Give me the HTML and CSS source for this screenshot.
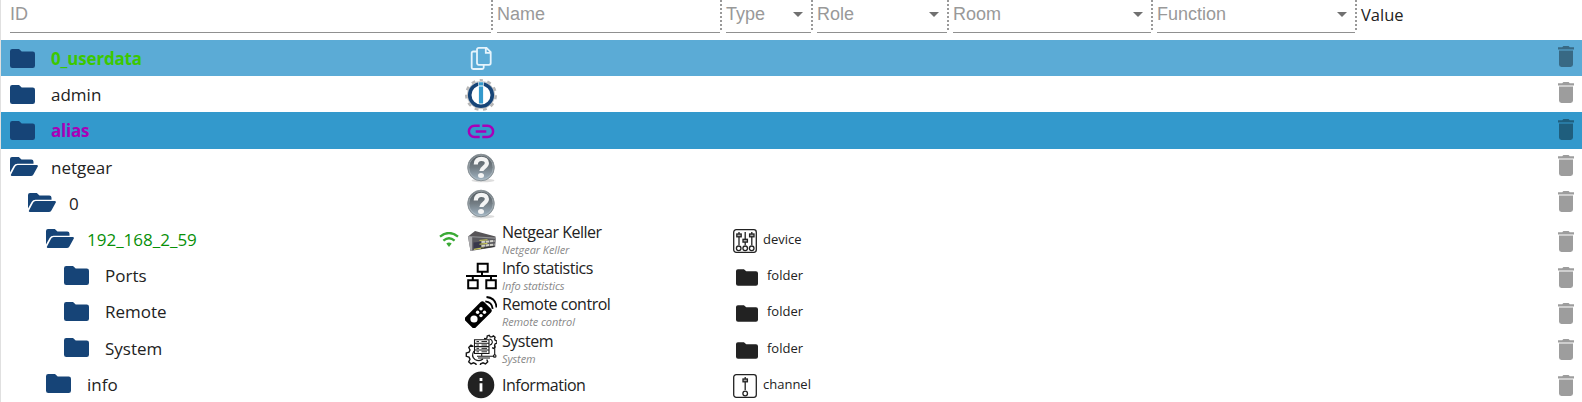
FILE: index.html
```
<!DOCTYPE html>
<html lang="en">
<head>
<meta charset="utf-8">
<title>Objects</title>
<link rel="stylesheet" href="styles.css">
</head>
<body>
<svg class="defs" width="0" height="0">
  <defs>
    <linearGradient id="gray" x1="0" y1="0" x2="0" y2="1"><stop offset="0" stop-color="#50575c"/><stop offset=".5" stop-color="#737d84"/><stop offset="1" stop-color="#a3b7c6"/></linearGradient>
    <symbol id="closed" viewBox="0 0 25 19"><path d="M2.2 0H9l2.7 2.5h11A2.3 2.3 0 0 1 25 4.8v11.9a2.3 2.3 0 0 1-2.3 2.3H2.3A2.3 2.3 0 0 1 0 16.700V2.200A2.200 2.200 0 0 1 2.200 0z"/></symbol>
    <symbol id="open" viewBox="0 0 28 19"><path d="M0 15.500V2A2 2 0 0 1 2 0h6.800l2.700 2.600h9.800a2.200 2.200 0 0 1 2.200 2.200V6.700H7.500A4.500 4.500 0 0 0 3.600 9z"/><path d="M7.700 8h19.200a1 1 0 0 1 .9 1.500l-4.400 8A3 3 0 0 1 20.800 19H1.800a.9.9 0 0 1-.8-1.400L5.200 9.500A2.900 2.900 0 0 1 7.700 8z"/></symbol>
    <symbol id="trash" viewBox="0 0 16 21"><path d="M1 4.600h14v13.800A2.500 2.500 0 0 1 12.500 21h-9A2.500 2.500 0 0 1 1 18.400zM0 1.200h4.200L5.400 0h5.200l1.200 1.200H16v2.200H0z"/></symbol>
    <symbol id="help" viewBox="0 0 32 32"><ellipse cx="18" cy="28.500" rx="11.500" ry="1.700" fill="#ddd"/><circle cx="16" cy="15.500" r="13.300" fill="url(#gray)" stroke="#8c9499" stroke-width="1"/><circle cx="16" cy="15.500" r="12.200" fill="none" stroke="#b9c2c8" stroke-width=".6"/><path d="M10.800 12.500c0-4 2.400-5.700 5.600-5.700 3.400 0 5.500 1.700 5.500 4.300 0 4.200-5.500 4.200-5.500 8" fill="none" stroke="#f4f4f4" stroke-width="4.200"/><ellipse cx="16" cy="23.400" rx="3" ry="2.500" fill="#f4f4f4"/></symbol>
  </defs>
</svg>
<main class="objects">
  <header class="head">
    <div class="col col-id">ID</div>
    <div class="col col-name">Name</div>
    <div class="col select">Type<i class="arrow"></i></div>
    <div class="col select">Role<i class="arrow"></i></div>
    <div class="col select">Room<i class="arrow"></i></div>
    <div class="col select">Function<i class="arrow"></i></div>
    <div class="value">Value</div>
  </header>

  <div class="row row-userdata">
    <div class="id"><svg class="closed"><use href="#closed"/></svg><b class="green">0_userdata</b></div>
    <svg class="icon" viewBox="0 0 32 32" fill="none" stroke="#e6f4fc" stroke-width="1.800"><path d="M11.800 8.500H8.200A1.500 1.500 0 0 0 6.700 10v14.500A1.500 1.500 0 0 0 8.200 26h9a1.500 1.500 0 0 0 1.500-1.500v-2.700M13.700 4.900h7.800l4.200 4.300v10.900a1.700 1.700 0 0 1-1.700 1.700H13.700a1.700 1.700 0 0 1-1.700-1.700V6.600a1.700 1.700 0 0 1 1.700-1.700zM20.800 5v4.900h5"/></svg>
    <svg class="trash"><use href="#trash"/></svg>
  </div>
  <div class="row">
    <div class="id"><svg class="closed"><use href="#closed"/></svg><span>admin</span></div>
    <svg class="icon" viewBox="0 0 32 32" fill="none"><circle cx="16" cy="16" r="14.600" stroke="#b7b7b7" stroke-width="2.800" stroke-dasharray="3.800 4.540" stroke-dashoffset="1.900" transform="rotate(-90 16 16)"/><circle cx="16" cy="16" r="13.700" stroke="#c5c5c5"/><circle cx="16" cy="16" r="11.300" fill="#fff" stroke="#164477" stroke-width="3.600"/><path d="M16 2.800v5.400" stroke="#fff" stroke-width="5.400"/><path d="M16 3.200v3.300M16 7.500v17" stroke="#3399cc" stroke-width="4.200"/></svg>
    <svg class="trash"><use href="#trash"/></svg>
  </div>
  <div class="row row-alias">
    <div class="id"><svg class="closed"><use href="#closed"/></svg><b class="purple">alias</b></div>
    <svg class="icon" viewBox="0 0 32 32" fill="none" stroke="#a800b7" stroke-width="2.500"><path d="M14.700 10.800H9.500a5.600 5.600 0 0 0 0 11.200h5.200M17.300 10.800h5.200a5.600 5.600 0 0 1 0 11.200h-5.200M10.700 16.400h10.600"/></svg>
    <svg class="trash"><use href="#trash"/></svg>
  </div>
  <div class="row">
    <div class="id"><svg class="open"><use href="#open"/></svg><span>netgear</span></div>
    <svg class="icon"><use href="#help"/></svg>
    <svg class="trash"><use href="#trash"/></svg>
  </div>
  <div class="row">
    <div class="id level1"><svg class="open"><use href="#open"/></svg><span>0</span></div>
    <svg class="icon"><use href="#help"/></svg>
    <svg class="trash"><use href="#trash"/></svg>
  </div>
  <div class="row low">
    <div class="id level2"><svg class="open"><use href="#open"/></svg><span class="device-id">192_168_2_59</span>
      <svg class="wifi" viewBox="0 0 20 15"><path d="M1 4.600q9-7.200 18 0M4.400 8.600q5.600-4.700 11.200 0" fill="none" stroke="#3aaa35" stroke-width="2.300"/><path d="M7.300 11.600q2.700-2 5.400 0L10 15z" fill="#3aaa35"/></svg>
    </div>
    <svg class="icon" viewBox="0 0 32 32"><path d="M3 12.500L10 7l20.500 5.500v2L6 17z" fill="#575457"/><path d="M3 12.500l27.800 1.700-.6 8.800L5.500 27z" fill="#5a595e"/><path d="M3 12.500l27.500 1.600" stroke="#929497" stroke-width="1.200"/><path d="M3 12.600L5.500 27l1.700-.3V13z" fill="#aaaaad"/><path d="M8.500 18.600l7.500-.8v5.400l-7.500 1.300z" fill="#37374a"/><path d="M16.500 18l13-1M16.500 22l13-1.500" stroke="#d2d2ca" stroke-width="2" stroke-dasharray="3.500 .7"/><path d="M14.500 16.400l8-.6M14.500 20.200l8-.8M9 25.400l10-1.700" stroke="#d0cf55" stroke-width="1"/><path d="M16 24.400l13-2" stroke="#333" stroke-width="1"/></svg>
    <div class="name"><span class="long">Netgear Keller</span><em>Netgear Keller</em></div>
    <div class="type"><svg class="box" viewBox="0 0 24 24" fill="none" stroke="#222" stroke-width="1.300"><rect x=".7" y=".7" width="22.600" height="22.600" rx="2.500"/><path d="M6 3v13M12.200 3v13M18.800 3v13"/><g fill="#aaa"><rect x="3.800" y="5" width="4.400" height="2.800"/><rect x="10" y="10.300" width="4.400" height="2.800"/><rect x="16.600" y="5" width="4.400" height="2.800"/></g><circle cx="5.700" cy="19.300" r="2.300"/><circle cx="12.200" cy="19.300" r="2.300"/><circle cx="18.700" cy="19.300" r="2.300"/></svg><span>device</span></div>
    <svg class="trash"><use href="#trash"/></svg>
  </div>
  <div class="row low">
    <div class="id level3"><svg class="closed"><use href="#closed"/></svg><span>Ports</span></div>
    <svg class="icon" viewBox="0 0 32 32" fill="none" stroke="#000" stroke-width="2"><path d="M12.700 3.700h10v8h-10zM3.200 20.200h9.500v8H3.200zM21.300 20.200h9.500v8h-9.500zM17 12v4M1 16h31M7.800 16v4M26 16v4"/></svg>
    <div class="name"><span class="long">Info statistics</span><em>Info statistics</em></div>
    <div class="type"><svg class="small"><use href="#closed"/></svg><span>folder</span></div>
    <svg class="trash"><use href="#trash"/></svg>
  </div>
  <div class="row low">
    <div class="id level3"><svg class="closed"><use href="#closed"/></svg><span>Remote</span></div>
    <svg class="icon" viewBox="0 0 32 32"><rect x="5.700" y="5.500" width="14.600" height="26.500" rx="2.500" transform="rotate(45 13 19)"/><g fill="#fff"><circle cx="9" cy="23" r="3.600"/><circle cx="16" cy="12.700" r="1.700"/><circle cx="19.500" cy="16.200" r="1.700"/><circle cx="12.600" cy="16.200" r="1.700"/><circle cx="16" cy="19.600" r="1.700"/></g><path d="M21.500 1q9.500 1 10 10.500M20.300 5.300q6.700.7 7.400 7.500" fill="none" stroke="#000" stroke-width="1.800"/></svg>
    <div class="name"><span class="long">Remote control</span><em>Remote control</em></div>
    <div class="type"><svg class="small"><use href="#closed"/></svg><span>folder</span></div>
    <svg class="trash"><use href="#trash"/></svg>
  </div>
  <div class="row low">
    <div class="id level3"><svg class="closed"><use href="#closed"/></svg><span>System</span></div>
    <svg class="icon" viewBox="0 0 32 32" fill="none" stroke="#161616" stroke-width="1.100"><path stroke-width="1.400" d="M8.500 13.500L6 12.200 3.800 14.500 5 17l-1 2.200-2.700.8v3.300l2.700.8 1 2.200-1.300 2.500 2.300 2.200 2.500-1.200 2.300 1 .8 2.500h3.300l.8-2.500 2.300-1 2.500 1.200 2.200-2.200-.9-2.200"/><path stroke-width="1.300" d="M19 5.500l1.700.3 1.300-1L22.200 3l2-.7 1.100 1.500 1.700.1 1.400-1 1.700 1.400-.6 1.600.8 1.500 1.600.6v2.200l-1.700.6-.7 1.500.6 1.700-1.600 1.400-1.400-.8"/><path d="M9 18q-3.500 5 1 8.500 4.500 2.500 8-.5M24.500 6q3 .6 2.800 3.700-.4 2-2.800 2.500"/><path d="M9.500 6.700H24v13.800H9.500zM9.500 10.200H24M9.500 13.600H24M9.500 17H24"/><path stroke-width=".9" d="M11.500 8.500H14M16.500 8.500H22M11.500 12H14M16.500 12H22M11.500 15.400H14M16.500 15.400H22M11.500 18.800H14M16.500 18.800H22"/><path d="M16.700 20.500v3M12 23.300h17.500M13 25h12M29.700 12v10"/><circle cx="29.700" cy="23" r="1.300"/></svg>
    <div class="name"><span class="long">System</span><em>System</em></div>
    <div class="type"><svg class="small"><use href="#closed"/></svg><span>folder</span></div>
    <svg class="trash"><use href="#trash"/></svg>
  </div>
  <div class="row low">
    <div class="id level2"><svg class="closed"><use href="#closed"/></svg><span>info</span></div>
    <svg class="icon" viewBox="0 0 32 32"><circle cx="16" cy="15.900" r="13.300" fill="#222"/><path d="M14.600 9h2.800v2.900h-2.800zM14.600 14.200h2.800v8.200h-2.800z" fill="#fff"/></svg>
    <div class="name single"><span class="long">Information</span></div>
    <div class="type"><svg class="box" viewBox="0 0 24 24" fill="none" stroke="#222" stroke-width="1.300"><rect x=".7" y=".7" width="22.600" height="22.600" rx="2.500"/><path d="M12.200 3v13"/><rect x="10" y="5" width="4.400" height="2.800" fill="#aaa"/><circle cx="12.200" cy="19.500" r="2.300"/></svg><span>channel</span></div>
    <svg class="trash"><use href="#trash"/></svg>
  </div>
</main>
</body>
</html>
```
FILE: styles.css
```
* { box-sizing: border-box; }
body { margin: 0; background: #fff; color: #222; font-family: "Open Sans", "Noto Sans", sans-serif; overflow: hidden; }
.defs { display: block; height: 0; }
.objects { width: 1582px; height: 402px; overflow: hidden; border-left: 1px solid #e0e0e0; }
.head { display: grid; grid-template-columns: 481px 223px 85px 130px 198px 198px 1fr; column-gap: 6px; height: 40px; padding-left: 9px; color: #999; font: 18px/28px "Liberation Sans", Arial, sans-serif; }
.col { position: relative; height: 33px; border-bottom: 1px solid #909090; }
.select { display: flex; justify-content: space-between; }
.col::after { content: ""; position: absolute; left: 100%; top: 0; width: 2px; height: 30px; background: repeating-linear-gradient(#999 0 2px, transparent 2px 4px); }
.arrow { width: 0; height: 0; margin: 12px 8px 0 0; border: 5.500px solid transparent; border-top: 5.500px solid #707070; border-bottom: 0; }
.value { color: #222; font: 16.500px/30px "Open Sans", sans-serif; }

.row { display: grid; grid-template-columns: 464px 32px 5px 231px 1fr 24px; height: 36.200px; align-items: start; font-size: 17px; }
.row-userdata { background: #5babd6; }
.row-alias { background: #3399cc; }
.id { grid-column: 1; display: flex; height: 36px; padding-left: 9px; line-height: 37px; color: #222; }
.level1 { padding-left: 27px; }
.level2 { padding-left: 45px; }
.level3 { padding-left: 63px; }
.id span, .id b { margin-left: 16px; }
.id b { letter-spacing: -.2px; }
.id .open + span { margin-left: 13px; }
.closed, .open { width: 25px; height: 19px; margin-top: 8.500px; fill: #164477; flex: none; }
.open { width: 28px; }
.green { color: #3cc800; }
.purple { color: #a800b7; }
.id .device-id { color: #089008; }
.low .id { line-height: 38px; }
.wifi { width: 20px; height: 15px; margin: 11px 6px 0 auto; }
.icon { grid-column: 2; width: 32px; height: 32px; margin-top: 3px; }
.name { grid-column: 4; display: flex; flex-direction: column; padding-top: 1px; font-size: 16px; line-height: 21px; white-space: nowrap; }
.long { letter-spacing: -.48px; }
.name em { color: #888; font-size: 11px; line-height: 13px; letter-spacing: -.08px; }
.name.single { padding-top: 9px; }
.type { grid-column: 5; display: flex; font-size: 13px; line-height: 37px; }
.box { width: 24px; height: 24px; margin: 8px 6px 0 0; }
.small { width: 22px; height: 17px; margin: 12px 9px 0 3px; fill: #222; }
.trash { grid-column: 6; width: 16px; height: 21px; margin-top: 6.300px; margin-left: -.5px; opacity: .38; }
.low .trash { margin-top: 9.700px; }
```
